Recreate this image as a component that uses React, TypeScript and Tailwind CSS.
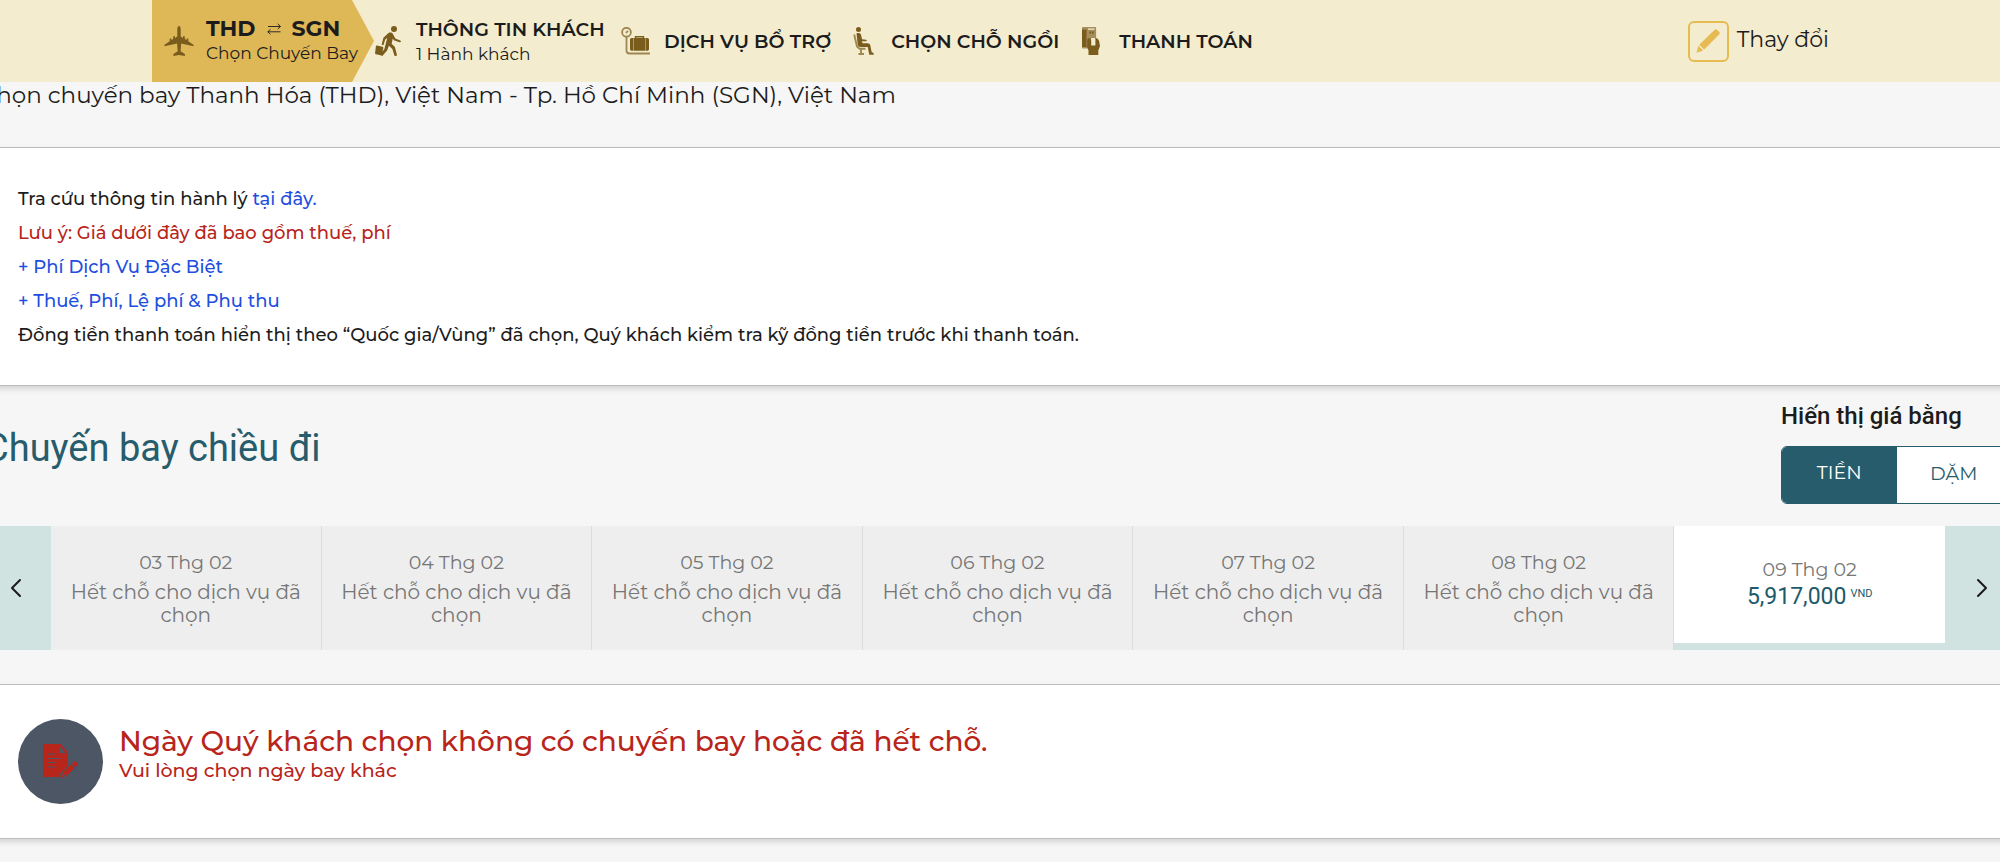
import React from 'react';
import { ChevronLeft, ChevronRight } from 'lucide-react';

interface IconProps {
  className?: string;
}

const PlaneIcon: React.FC<IconProps> = ({ className }) => (
  <svg viewBox="0 0 30 30" className={className} fill="currentColor" aria-hidden="true">
    <path d="M15 0c1.100 0 1.700 1.500 1.700 3.200v7.300l2.300 1.400v-1.600h1.800v2.700l1.800 1.100v-1.500h1.700v2.600l5.200 3.500v1.500l-12.300-2.800-.6 7.800 4.300 2.900V30L15 29l-5.600 1v-1.900l4.300-2.900-.6-7.800L.5 20.200v-1.500l5.200-3.500v-2.600h1.700v1.500l1.800-1.100v-2.700H11v1.600l2.300-1.400V3.200C13.300 1.500 13.900 0 15 0z" />
  </svg>
);

const TravellerIcon: React.FC<IconProps> = ({ className }) => (
  <svg viewBox="0 0 26 30" className={className} fill="currentColor" aria-hidden="true">
    <circle cx="19" cy="3" r="3" />
    <path d="M13.500 7c1.500-.7 3.500-.5 4.300.8l2.500 4.700 5 1.900c1.100.5.5 2.200-.7 1.900l-5.800-2-1-1.700-1.200 5.100 3.300 3.400 2 7.600c.4 1.500-2.100 2-2.600.6l-1.900-6.400-3.500-3.200-1.800 4.700-4.300 5c-1 1.100-2.900-.3-2.100-1.600l3.700-4.900 2.800-11-2 1.500-1.500 5.100c-.4 1.200-2.200.7-1.900-.5l1.600-6.200z" />
    <path d="M2 19.500l5.500 1.300c.6.100.9.600.8 1.200l-1.400 6.500c-.1.600-.6.900-1.200.8L.9 28.200c-.6-.1-.9-.6-.8-1.200l.8-6.700c.1-.6.500-.9 1.100-.8z" />
  </svg>
);

const LuggageScaleIcon: React.FC<IconProps> = ({ className }) => (
  <svg viewBox="0 0 30 28" className={className} aria-hidden="true">
    <g fill="none" stroke="currentColor" strokeWidth="1.800">
      <g opacity=".7">
        <circle cx="5.500" cy="5.200" r="4.400" />
        <path d="M5 5.800 7 3.800M5.500 9.600v13.900c0 2 1 3 3 3H29" />
      </g>
      <path d="M14.500 11.500V9.800h8v1.700" strokeWidth="1.400" />
    </g>
    <path fill="currentColor" d="M10.800 11h1.400v12.800h-1.400c-1.100 0-1.800-.7-1.800-1.800v-9.200c0-1.100.7-1.800 1.800-1.800zm1.800 0h11.800v12.800H12.600zm12.200 0h1.400c1.100 0 1.800.7 1.800 1.800V22c0 1.100-.7 1.800-1.800 1.800h-1.400z" />
  </svg>
);

const SeatIcon: React.FC<IconProps> = ({ className }) => (
  <svg viewBox="0 0 21 28" className={className} aria-hidden="true">
    <circle cx="5.500" cy="2.500" r="2.500" fill="currentColor" />
    <path fill="currentColor" d="M3.500 6.500C5 5.600 7.500 6 8 7.800l1 4.400 4 .5c1 .1 1 1.600 0 1.600H8.900l.7 2h5c1.300 0 2.300.7 2.600 1.800l1.500 7.200 2 .7v1.700h-4.400L14.700 20H7.500c-1.400 0-2.400-.8-2.700-2z" />
    <path fill="none" stroke="currentColor" strokeWidth="1.900" opacity=".7" d="M1.200 7.500 4 19.500l2.500 2.300h6M8 22v5M5.500 27h5.500" />
  </svg>
);

const CardHandIcon: React.FC<IconProps> = ({ className }) => (
  <svg viewBox="0 0 18 28" className={className} aria-hidden="true">
    <path fill="currentColor" opacity=".65" d="M1.300 0h12c.5 0 .8.300.8.800V12H8v9.500H1.300C.5 21.500 0 21 0 20.200V1.300C0 .5.500 0 1.300 0z" />
    <path fill="currentColor" d="M0 2.500h4.500v17.500H1c-.6 0-1-.4-1-1z" />
    <path fill="#f4ecce" d="M6 1.500h6.500v1.200H6zM9.300 11h4v7h-4z" />
    <path fill="currentColor" d="M7.500 4.500h1.600v2.200H7.500zM10 4.500h1.600v2.200H10zM5.200 13.200c.2-2.600 3.600-2.600 4 0v5.300h4.200V11c2 0 3.200 1.500 3.700 3l.9 5-1.700 4.500V28H6.500v-4.500L5.200 20z" />
  </svg>
);

const SwapIcon: React.FC<IconProps> = ({ className }) => (
  <svg viewBox="0 0 14 12" className={className} fill="none" stroke="currentColor" strokeWidth=".9" aria-hidden="true">
    <path d="M1 3.500h12.500M10.700.8l2.800 2.700L10.700 6M13.500 8.800H.8M3.500 6.300.8 8.800l2.700 2.500" />
  </svg>
);

const PencilIcon: React.FC<IconProps> = ({ className }) => (
  <svg viewBox="0 0 24 24" className={className} fill="currentColor" aria-hidden="true">
    <path d="M18.700.700c.6-.6 1.500-.6 2.100 0l2.500 2.400c.6.600.6 1.500 0 2.100L8.200 20.500l-5-4.800z" />
    <path d="M2.300 16.800l4.900 4.700L.5 23.800z" />
  </svg>
);

const DocumentEditIcon: React.FC<IconProps> = ({ className }) => (
  <svg viewBox="0 0 35 35" className={className} aria-hidden="true">
    <path fill="currentColor" d="M0 0h17.500L25 8.500V22l-7.500 7.500-1 3.500H0z" />
    <path fill="#4d5665" d="M17 2.500l6 6.700h-6z" />
    <path stroke="#4d5665" strokeWidth="1.200" d="M4.500 10h8M4.500 14.500h13M4.500 18.500h8M4.500 23H13" />
    <path fill="currentColor" stroke="#4d5665" strokeWidth="1" d="M17 35l1.800-6.200L30.500 17.500c.8-.8 1.900-.8 2.700 0l1.400 1.400c.8.800.8 1.900 0 2.700L23 33z" />
    <path fill="none" stroke="#4d5665" strokeWidth="1.200" d="M18.800 28.800 23 33M28 19.700l4.300 4.300" />
  </svg>
);

const steps = [
  { key: 'baggage', label: 'DỊCH VỤ BỔ TRỢ', icon: LuggageScaleIcon, size: 'h-7 w-[30px]' },
  { key: 'seat', label: 'CHỌN CHỖ NGỒI', icon: SeatIcon, size: 'h-7 w-[21px]' },
  { key: 'payment', label: 'THANH TOÁN', icon: CardHandIcon, size: 'h-7 w-[18px]' },
];

const soldOutDays = ['03', '04', '05', '06', '07', '08'];

const BookingSteps: React.FC = () => (
  <header className="flex h-[82px] items-center bg-[#f4ecce] pl-[152px]">
    <nav aria-label="Các bước đặt vé" className="flex h-full items-center whitespace-nowrap">
      <a
        href="#flights"
        className="flex h-full w-[222px] items-center bg-[#deb757] [clip-path:polygon(0_0,200px_0,100%_50%,200px_100%,0_100%)]"
      >
        <span className="flex w-[54px] shrink-0 justify-center">
          <PlaneIcon className="h-[30px] w-[30px] text-[#7a5c1c]" />
        </span>
        <span>
          <span className="flex items-center gap-[11px] text-[22px] leading-6 font-bold">
            THD <SwapIcon className="h-3 w-[14px]" /> SGN
          </span>
          <span className="block text-[17px] leading-6">Chọn Chuyến Bay</span>
        </span>
      </a>
      <a href="#passengers" className="-ml-[14px] flex w-[248px] items-center">
        <span className="flex w-14 shrink-0 justify-center">
          <TravellerIcon className="h-[30px] w-[26px] text-[#7a5c1c]" />
        </span>
        <span className="pt-0.5">
          <span className="block text-[19px] leading-6 font-semibold">THÔNG TIN KHÁCH</span>
          <span className="block text-[17px] leading-6">1 Hành khách</span>
        </span>
      </a>
      {steps.map((step) => {
        const Icon = step.icon;
        return (
          <a key={step.key} href={`#${step.key}`} className="mr-1 flex items-center">
            <span className="flex w-14 shrink-0 justify-center">
              <Icon className={`text-[#7a5c1c] ${step.size}`} />
            </span>
            <span className="pt-0.5 text-[19px] leading-6 font-semibold">{step.label}</span>
          </a>
        );
      })}
    </nav>
    <button type="button" className="mr-[171px] ml-auto flex items-center gap-2 text-[22px]">
      <span className="flex h-[41px] w-[41px] items-center justify-center rounded-md border-2 border-[#e5bb52] text-[#e5bb52]">
        <PencilIcon className="h-6 w-6" />
      </span>
      <span className="pb-1">Thay đổi</span>
    </button>
  </header>
);

const FareNotes: React.FC = () => (
  <section className="-mx-2 border-y border-[#b9bcbe] bg-white px-[26px] pt-[34px] pb-[33px] text-[18px] leading-[34px] font-medium shadow-[0_3px_6px_rgba(0,0,0,0.14)]">
    <p>
      Tra cứu thông tin hành lý{' '}
      <a href="#baggage-info" className="text-[#1f4fe0]">
        tại đây.
      </a>
    </p>
    <p className="text-[#b8251b]">Lưu ý: Giá dưới đây đã bao gồm thuế, phí</p>
    <p>
      <a href="#special-fees" className="text-[#1f4fe0]">
        + Phí Dịch Vụ Đặc Biệt
      </a>
    </p>
    <p>
      <a href="#taxes" className="text-[#1f4fe0]">
        + Thuế, Phí, Lệ phí &amp; Phụ thu
      </a>
    </p>
    <p>Đồng tiền thanh toán hiển thị theo “Quốc gia/Vùng” đã chọn, Quý khách kiểm tra kỹ đồng tiền trước khi thanh toán.</p>
  </section>
);

const DateStrip: React.FC = () => (
  <div className="flex h-[124px] text-[19px] text-[#767676]">
    <button type="button" aria-label="Ngày trước" className="flex w-[51px] shrink-0 items-center bg-[#d1e3e0] text-[#1a1a1a]">
      <ChevronLeft className="h-8 w-8" strokeWidth={1.5} />
    </button>
    <div className="grid flex-1 grid-cols-7">
      {soldOutDays.map((day) => (
        <button key={day} type="button" className="border-r border-[#dcdcdc] bg-[#eeeeee] px-2">
          <span className="mb-1.5 block leading-[25px]">{day} Thg 02</span>
          <span className="block text-[20px] leading-[23px]">
            Hết chỗ cho dịch vụ đã
            <br />
            chọn
          </span>
        </button>
      ))}
      <button type="button" aria-pressed="true" className="border-b-[7px] border-[#d1e3e0] bg-white">
        <span className="block leading-7">09 Thg 02</span>
        <span className="flex justify-center gap-1 pb-1 font-['Roboto',sans-serif] text-[#1d5a6b]">
          <span className="text-[23px] leading-[26px]">5,917,000</span>
          <span className="pt-1 text-[11px] leading-3">VND</span>
        </span>
      </button>
    </div>
    <button type="button" aria-label="Ngày sau" className="flex w-[55px] shrink-0 items-center justify-end bg-[#d1e3e0] pr-0.5 text-[#1a1a1a]">
      <ChevronRight className="h-8 w-8" strokeWidth={1.5} />
    </button>
  </div>
);

const App: React.FC = () => (
  <div className="min-h-screen overflow-x-hidden bg-[#f6f6f6] font-['Montserrat','Inter','Noto_Sans',sans-serif] text-[#1c1c1c]">
    <BookingSteps />
    <main>
      <h1 className="-ml-5 h-[65px] text-[23px] leading-[26px] whitespace-nowrap">
        Chọn chuyến bay Thanh Hóa (THD), Việt Nam - Tp. Hồ Chí Minh (SGN), Việt Nam
      </h1>
      <FareNotes />
      <section className="overflow-hidden pt-4">
        <div className="flex justify-between pb-[22px]">
          <h2 className="-ml-4 pt-[22px] font-['Roboto',sans-serif] text-[38px] leading-[48px] text-[#265c6b]">
            Chuyến bay chiều đi
          </h2>
          <div className="-mr-3">
            <p className="font-['Roboto',sans-serif] text-[24px] leading-[28px] font-medium">Hiến thị giá bằng</p>
            <div className="mt-4 flex h-[58px] w-[231px] overflow-hidden rounded-md border border-[#265c6b] text-[19px]">
              <button type="button" aria-pressed="true" className="flex-1 bg-[#265c6b] pb-1 text-white">
                TIỀN
              </button>
              <button type="button" aria-pressed="false" className="flex-1 bg-white pb-0.5 text-[#265c6b]">
                DẶM
              </button>
            </div>
          </div>
        </div>
        <DateStrip />
      </section>
      <section className="-mx-2 mt-[34px] flex gap-4 border-y border-[#bdbdbd] bg-white px-[26px] py-[34px] text-[#b8251b] shadow-[0_3px_6px_rgba(0,0,0,0.14)]">
        <span className="flex h-[85px] w-[85px] shrink-0 items-center justify-center rounded-full bg-[#4d5665]">
          <DocumentEditIcon className="h-[35px] w-[35px]" />
        </span>
        <div className="pt-1 font-medium">
          <h3 className="text-[28px] leading-9">Ngày Quý khách chọn không có chuyến bay hoặc đã hết chỗ.</h3>
          <p className="text-[19px] leading-6">Vui lòng chọn ngày bay khác</p>
        </div>
      </section>
    </main>
  </div>
);

export default App;
